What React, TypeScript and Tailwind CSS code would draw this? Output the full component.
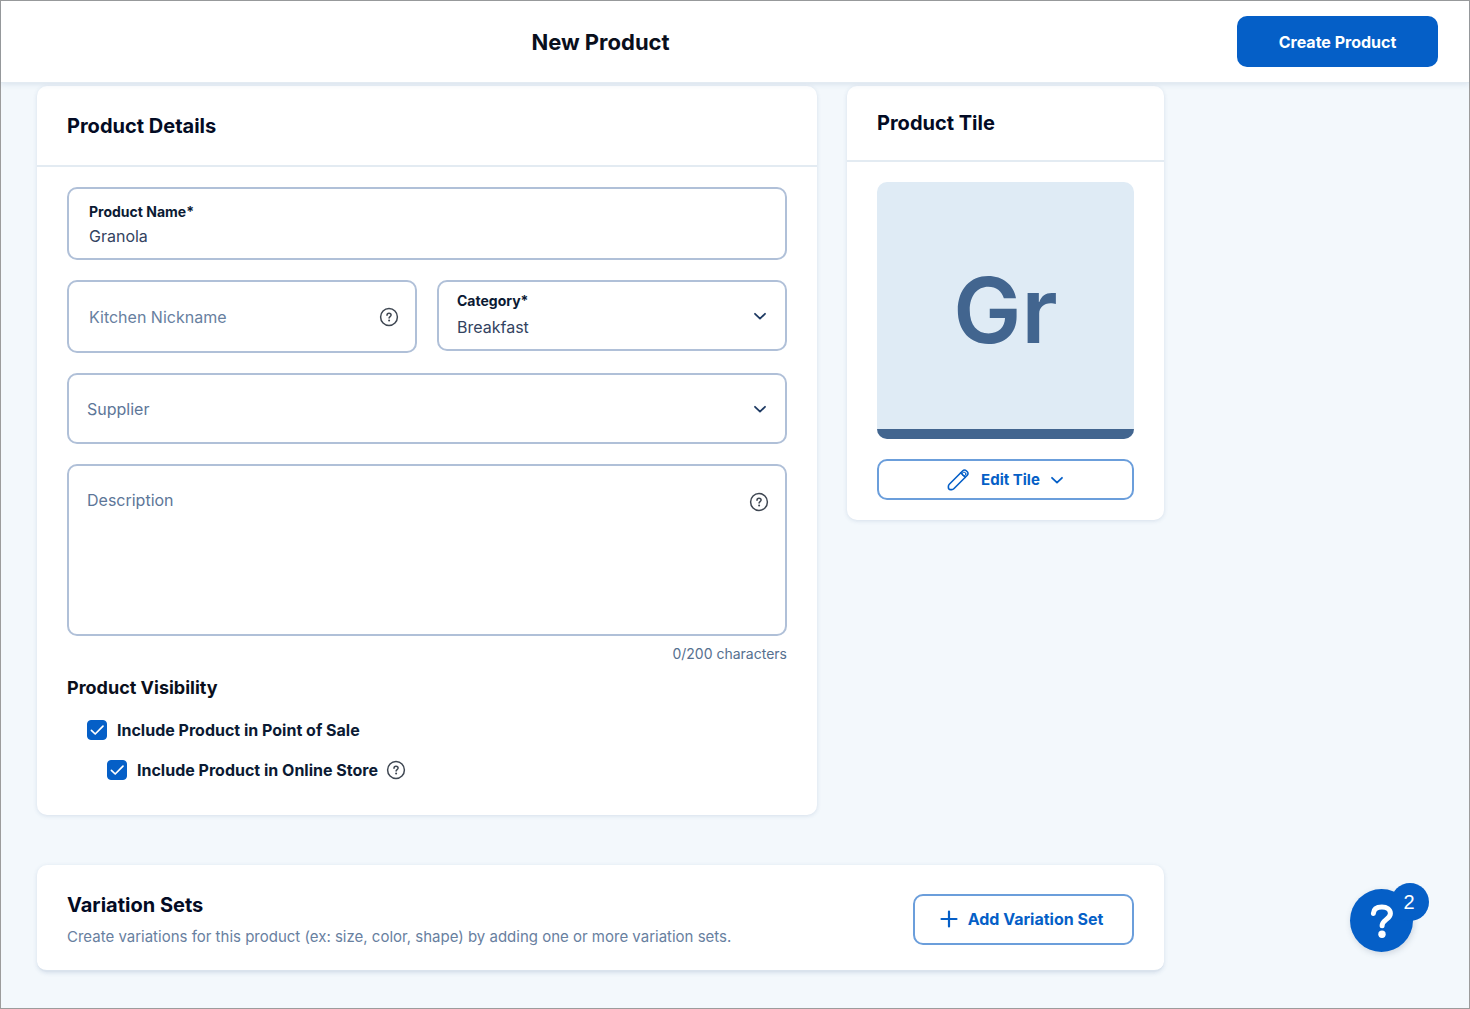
import { useState } from "react";
import { clsx } from "clsx";

const CATEGORIES = ["Breakfast", "Lunch", "Dinner", "Drinks"];
const SUPPLIERS = ["Farm Fresh", "Local Bakery"];
const MAX_DESCRIPTION = 200;

export default function App() {
  return (
    <div className="flex min-h-screen flex-col border border-[#9c9c9c] bg-[#f3f8fc] font-['Inter',sans-serif] text-[#0b1a33]">
      <Header />
      <main className="w-full max-w-[1199px] px-9 pt-[3px] pb-8">
        <div className="flex items-start gap-[30px]">
          <ProductDetails />
          <ProductTile />
        </div>
        <VariationSets />
      </main>
      <HelpWidget count={2} />
    </div>
  );
}

function Header() {
  return (
    <header className="relative z-10 flex h-[82px] items-center justify-between gap-6 border-b border-[#e3ebf2] bg-white pr-[31px] pl-9 shadow-[0_1px_6px_rgba(60,100,150,0.16)]">
      <h1 className="max-w-[1127px] flex-1 text-center text-[22px] leading-7 font-bold text-[#0a0f1c]">
        New Product
      </h1>
      <button
        type="button"
        className="h-[51px] w-[201px] rounded-[10px] bg-[#055fc7] text-base font-bold text-white"
      >
        Create Product
      </button>
    </header>
  );
}

function Card({
  className,
  children,
}: {
  className?: string;
  children: React.ReactNode;
}) {
  return (
    <section
      className={clsx(
        "rounded-[10px] bg-white shadow-[0_1px_4px_rgba(60,100,150,0.16)]",
        className,
      )}
    >
      {children}
    </section>
  );
}

function CardTitle({ children }: { children: React.ReactNode }) {
  return (
    <h2 className="text-xl leading-6 font-bold text-[#030b24]">{children}</h2>
  );
}

const FIELD = "relative rounded-[10px] border-2 border-[#b0c0d8] bg-white";

function ProductDetails() {
  const [name, setName] = useState("Granola");
  const [description, setDescription] = useState("");

  return (
    <Card className="min-w-0 flex-1 pb-[35px]">
      <div className="flex h-[81px] items-center border-b-2 border-[#e3ebf2] px-[30px]">
        <CardTitle>Product Details</CardTitle>
      </div>

      <div className="flex flex-col gap-5 px-[30px] pt-5">
        <div className={clsx(FIELD, "flex h-[73px] flex-col justify-center px-5")}>
          <label htmlFor="name" className="text-[14px] leading-6 font-bold">
            Product Name*
          </label>
          <input
            id="name"
            value={name}
            onChange={(e) => setName(e.target.value)}
            className="h-6 w-full bg-transparent text-base text-[#33435f] outline-none"
          />
        </div>

        <div className="grid grid-cols-2 items-start gap-5">
          <div className={clsx(FIELD, "flex h-[73px] items-center px-5")}>
            <input
              aria-label="Kitchen Nickname"
              placeholder="Kitchen Nickname"
              className="min-w-0 flex-1 bg-transparent text-base outline-none placeholder:text-[#68809f]"
            />
            <HelpButton className="-mr-1" />
          </div>
          <div className={clsx(FIELD, "flex h-[71px] flex-col justify-center pb-0.5")}>
            <label
              htmlFor="category"
              className="px-[18px] text-[14px] leading-6 font-bold"
            >
              Category*
            </label>
            <select
              id="category"
              className="h-7 w-full appearance-none bg-transparent px-[18px] text-base text-[#33435f] outline-none"
            >
              {CATEGORIES.map((c) => (
                <option key={c}>{c}</option>
              ))}
            </select>
            <Chevron className="pointer-events-none absolute top-[27px] right-[18px] h-3.5 w-3.5 text-[#1e3a63]" />
          </div>
        </div>

        <div className={clsx(FIELD, "flex h-[71px] items-center")}>
          <select
            aria-label="Supplier"
            defaultValue=""
            className="h-full w-full appearance-none bg-transparent px-[18px] text-base text-[#5d7698] outline-none"
          >
            <option value="">Supplier</option>
            {SUPPLIERS.map((s) => (
              <option key={s}>{s}</option>
            ))}
          </select>
          <Chevron className="pointer-events-none absolute top-[27px] right-[18px] h-3.5 w-3.5 text-[#1e3a63]" />
        </div>

        <div>
          <div className={clsx(FIELD, "flex h-[172px] items-start px-[18px] pt-[22px]")}>
            <textarea
              aria-label="Description"
              placeholder="Description"
              maxLength={MAX_DESCRIPTION}
              value={description}
              onChange={(e) => setDescription(e.target.value)}
              className="h-[130px] min-w-0 flex-1 resize-none bg-transparent text-base leading-6 outline-none placeholder:text-[#5d7698]"
            />
            <HelpButton className="mt-1 -mr-0.5" />
          </div>
          <p className="mt-2 text-right text-[14px] leading-5 text-[#56708f]">
            {description.length}/{MAX_DESCRIPTION} characters
          </p>
        </div>
      </div>

      <fieldset className="mt-3 px-[30px]">
        <legend className="text-lg leading-6 font-bold text-[#0a0f1c]">
          Product Visibility
        </legend>
        <div className="mt-5 flex flex-col gap-5 pl-5">
          <CheckRow id="pos" label="Include Product in Point of Sale" />
          <div className="flex items-center gap-2 pl-5">
            <CheckRow id="online" label="Include Product in Online Store" />
            <HelpButton />
          </div>
        </div>
      </fieldset>
    </Card>
  );
}

function CheckRow({ id, label }: { id: string; label: string }) {
  return (
    <div className="flex h-5 items-center gap-2.5">
      <span className="relative flex h-5 w-5">
        <input
          id={id}
          type="checkbox"
          defaultChecked
          className="peer h-5 w-5 appearance-none rounded-[4px] border border-[#b0c0d8] bg-white checked:border-[#055fc7] checked:bg-[#055fc7]"
        />
        <svg
          viewBox="0 0 20 20"
          fill="none"
          stroke="currentColor"
          strokeWidth="1.7"
          strokeLinecap="round"
          strokeLinejoin="round"
          className="pointer-events-none absolute inset-0 hidden text-white peer-checked:block"
        >
          <path d="M4.4 10.3 8.2 14 16 6.2" />
        </svg>
      </span>
      <label htmlFor={id} className="text-base leading-5 font-bold">
        {label}
      </label>
    </div>
  );
}

function ProductTile() {
  return (
    <Card className="w-[317px] shrink-0 pb-5">
      <div className="flex h-[76px] items-center border-b-2 border-[#e3ebf2] px-[30px]">
        <CardTitle>Product Tile</CardTitle>
      </div>
      <div className="px-[30px] pt-5">
        <div className="flex aspect-square flex-col overflow-hidden rounded-[10px] bg-[#dfebf5]">
          <div className="flex flex-1 items-center justify-center pt-2.5">
            <span className="text-[91px] leading-none font-semibold text-[#42658f]">
              Gr
            </span>
          </div>
          <div className="h-2.5 bg-[#42658f]" />
        </div>
        <button
          type="button"
          className="mt-5 flex h-[41px] w-full items-center justify-center rounded-[10px] border-2 border-[#6b9edb] text-[15px] leading-6 font-bold text-[#055fc7]"
        >
          <PencilIcon className="h-[22px] w-[22px]" />
          <span className="ml-3">Edit Tile</span>
          <Chevron className="ml-2.5 h-3.5 w-3.5" />
        </button>
      </div>
    </Card>
  );
}

function VariationSets() {
  return (
    <Card className="mt-[50px] flex h-[107px] items-center justify-between gap-6 border-b-2 border-[#dae3ed] px-[30px] pt-[3px]">
      <div className="pt-1">
        <CardTitle>Variation Sets</CardTitle>
        <p className="mt-2 text-[15px] leading-6 text-[#68809f]">
          Create variations for this product (ex: size, color, shape) by adding
          one or more variation sets.
        </p>
      </div>
      <button
        type="button"
        className="flex h-[51px] w-[221px] shrink-0 items-center justify-center gap-2.5 rounded-[10px] border-2 border-[#6b9edb] pr-1 text-base font-bold text-[#055fc7]"
      >
        <svg
          viewBox="0 0 18 18"
          className="h-[18px] w-[18px]"
          stroke="currentColor"
          strokeWidth="2.2"
          strokeLinecap="round"
        >
          <path d="M9 1.5v15M1.5 9h15" />
        </svg>
        <span>Add Variation Set</span>
      </button>
    </Card>
  );
}

function HelpWidget({ count }: { count: number }) {
  return (
    <button
      type="button"
      aria-label="Help"
      className="fixed right-[57px] bottom-[57px] flex h-[63px] w-[63px] items-center justify-center rounded-full bg-[#055fc7] text-white shadow-[1px_2px_6px_rgba(60,80,110,0.2)]"
    >
      <svg
        viewBox="0 0 24 36"
        fill="none"
        className="h-9 w-6"
        stroke="currentColor"
        strokeLinecap="round"
        strokeLinejoin="round"
      >
        <path
          strokeWidth="5"
          d="M3.4 10.4C3.6 6 7 3.9 11.9 3.9c4.9 0 8.5 2.5 8.5 6.6 0 5.6-8.3 6.2-8.3 12.3"
        />
        <circle cx="12" cy="31.2" r="3.7" fill="currentColor" stroke="none" />
      </svg>
      <span className="absolute -top-1.5 -right-4 flex h-[38px] w-[38px] items-center justify-center rounded-full bg-[#055fc7] pr-0.5 font-['Liberation_Sans',sans-serif] text-xl leading-none">
        {count}
      </span>
    </button>
  );
}

function HelpButton({ className }: { className?: string }) {
  return (
    <button type="button" aria-label="More information" className={className}>
      <svg
        viewBox="0 0 20 20"
        fill="none"
        stroke="currentColor"
        strokeWidth="1.5"
        strokeLinecap="round"
        className="h-5 w-5 text-[#3f4752]"
      >
        <circle cx="10" cy="10" r="8.4" />
        <path d="M8 8.2c0-1.200.9-1.900 2-1.900s2.100.7 2.100 1.800c0 1.400-2 1.500-2 2.900" />
        <circle cx="10.1" cy="13.5" r="1" fill="currentColor" stroke="none" />
      </svg>
    </button>
  );
}

function Chevron({ className }: { className?: string }) {
  return (
    <svg
      viewBox="0 0 14 14"
      fill="none"
      stroke="currentColor"
      strokeWidth="1.8"
      strokeLinecap="round"
      strokeLinejoin="round"
      className={className}
    >
      <path d="M2 4.8 7 9.6l5-4.8" />
    </svg>
  );
}

function PencilIcon({ className }: { className?: string }) {
  return (
    <svg
      viewBox="0 0 22 22"
      fill="none"
      stroke="currentColor"
      strokeWidth="1.6"
      strokeLinecap="round"
      strokeLinejoin="round"
      className={className}
    >
      <path d="M2.300 15.200 15.800 1.700a2.400 2.400 0 0 1 3.400 0l1.100 1.100a2.400 2.400 0 0 1 0 3.400L6.800 19.700a3 3 0 0 1-2.100.9H3.400a2 2 0 0 1-2-2v-1.300a3 3 0 0 1 .9-2.100Z" />
      <path d="m13.700 3.800 4.500 4.500" />
      <circle cx="17" cy="5" r="1.900" strokeWidth="1" />
    </svg>
  );
}
